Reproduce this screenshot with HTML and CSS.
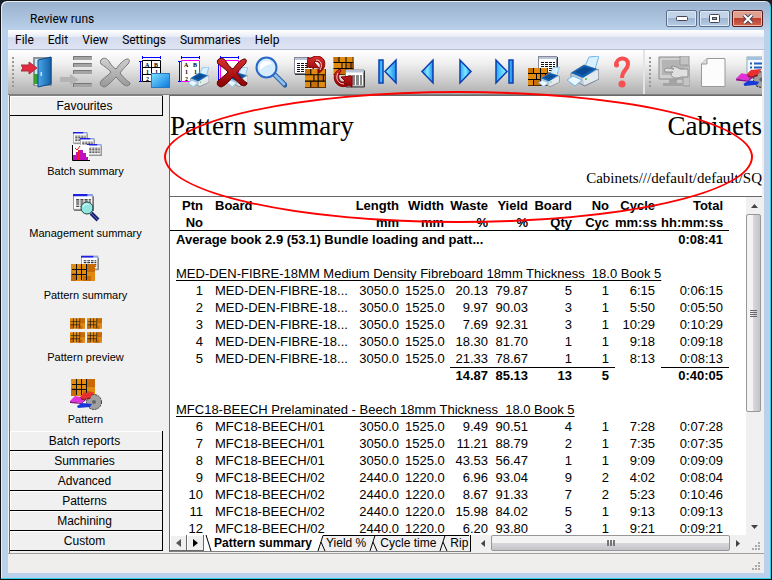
FILE: index.html
```html
<!DOCTYPE html>
<html lang="en">
<head>
    <meta charset="UTF-8">
    <meta name="viewport" content="width=device-width, initial-scale=1.0">
    <title>Review runs</title>
    <link rel="stylesheet" href="styles.css">
</head>
<body>
    <!-- Shared icon parts -->
    <svg class="sprite" aria-hidden="true">
        <defs>
            <linearGradient id="blue" x1="0" y1="0" x2="1" y2="1"><stop offset="0" stop-color="#7fe0ff"/><stop offset="1" stop-color="#0a78e0"/></linearGradient>
            <linearGradient id="nav" x1="0" y1="0" x2="1" y2="0"><stop offset="0" stop-color="#2aa8ff"/><stop offset="0.5" stop-color="#7fe6ff"/><stop offset="1" stop-color="#1a8cf0"/></linearGradient>
            <linearGradient id="grey" x1="0" y1="0" x2="0" y2="1"><stop offset="0" stop-color="#d0d0d0"/><stop offset="1" stop-color="#989898"/></linearGradient>
            <linearGradient id="red" x1="0" y1="0" x2="0" y2="1"><stop offset="0" stop-color="#d83030"/><stop offset="1" stop-color="#8a0000"/></linearGradient>
            <linearGradient id="door" x1="0" y1="0" x2="1" y2="0"><stop offset="0" stop-color="#4aa6e8"/><stop offset="1" stop-color="#1462a8"/></linearGradient>
        </defs>
        <symbol id="printer" viewBox="0 0 32 32">
            <path d="M18 10 L22 1 L32 0 L28 13Z" fill="#d8f0ff" stroke="#6fb4e8"/>
            <path d="M4 17 L17 9 L32 14 L32 23 L18 30 L4 23Z" fill="#c3ccd6" stroke="#7b8794"/>
            <path d="M4 17 L17 9 L30 13 L16 22Z" fill="#0f62b4"/>
            <path d="M8 16 L17 11 L26 13 L16 19Z" fill="#0b4a92"/>
            <path d="M16 22 L31 14 L31 23 L17 29Z" fill="#e4e9ee"/>
            <path d="M0 24 L6 20 L15 24 L8 30Z" fill="#eaf7ff" stroke="#6fb4e8"/>
            <circle cx="19" cy="23" r="1" fill="#30c030"/>
        </symbol>
        <symbol id="bricks" viewBox="0 0 20 18">
            <rect width="20" height="18" fill="#e08a10"/>
            <path d="M0 0h6v5H0zM12 6h8v5h-8zM5 12h7v6H5z" fill="#c96f08"/>
            <path d="M0 5.5h20M0 11.5h20M5.5 0v5M12.5 0v18M5.5 11v7M8.5 5v6M17.5 5v6" stroke="#000" fill="none"/>
            <path d="M19.5 0v17.5H0" stroke="#5a3000" fill="none"/>
        </symbol>
        <symbol id="board" viewBox="0 0 24 17">
            <rect width="24" height="17" fill="#e08a10"/>
            <path d="M16 0h8v8h-8zM0 9h5v8H0zM12 12h8v5h-8z" fill="#c96a08"/>
            <path d="M1 5.5h14M1 10.5h15M5.5 0v16M10.5 0v16M15.5 0v16" stroke="#111" fill="none"/>
        </symbol>
        <symbol id="sheet" viewBox="0 0 20 18">
            <rect x="0.5" y="0.5" width="18" height="16" fill="#fff" stroke="#889"/>
            <rect x="1" y="1" width="18" height="2" fill="#b8c4d8"/>
            <path d="M3 6.5h14M3 8.5h14M3 10.5h14M3 12.5h14M3 14.5h14" stroke="#111" stroke-dasharray="3 1" fill="none"/>
            <path d="M19.5 1v16.5H1" stroke="#333" fill="none"/>
        </symbol>
        <symbol id="win" viewBox="0 0 20 16">
            <rect x="0.5" y="0.5" width="18" height="14" fill="#fff" stroke="#999"/>
            <path d="M0 0h14v2H0z" fill="#2020e0"/><path d="M14 0h5v2h-5z" fill="#8ca0f0"/>
            <path d="M3 5.5h14M3 7.5h14M3 9.5h14M3 11.5h14" stroke="#111" stroke-dasharray="3 1" fill="none"/>
            <path d="M19.5 2v13.5H1" stroke="#777" fill="none"/>
        </symbol>
        <symbol id="cross" viewBox="0 0 32 32">
            <path d="M3 3 C6 1 9 3 11 7 C13 10 15 12 17 13 C20 9 24 4 28 3 C31 3 31 5 29 8 C26 11 23 14 21 17 C24 21 28 25 31 27 C31 30 27 31 24 28 C21 26 19 23 17 21 C13 25 9 30 5 31 C1 30 0 27 3 24 C6 21 10 19 12 16 C8 12 5 10 2 8 C1 6 1 4 3 3Z"/>
        </symbol>
        <symbol id="saw" viewBox="0 0 32 18">
            <circle cx="24" cy="10" r="7.5" fill="#a0a0a0" stroke="#333" stroke-dasharray="2 1"/>
            <circle cx="24" cy="10" r="2" fill="#666"/>
            <path d="M0 9 L5 4 L16 6 L11 11Z" fill="#e030d8"/><path d="M0 9 L11 11 L16 6 L16 8 L11 12 L0 11Z" fill="#90108c"/>
            <path d="M10 5 L14 1 L24 0 L21 5 L14 7Z" fill="#e83030"/><path d="M10 5 L14 7 L21 5 L20 7 L12 8Z" fill="#901010"/>
            <path d="M7 14 L12 11 L22 12 L20 15 L8 16Z" fill="#1838d8"/>
        </symbol>
        <symbol id="dims" viewBox="0 0 32 32">
            <path d="M4 1.5h19M4.500 0v3M22.500 0v3M2.500 5v21M1 5.500h3M1 25.500h3" stroke="#0000ff" fill="none"/>
        </symbol>
    </svg>

    <div class="window">
        <header class="titlebar">
            <h1>Review runs</h1>
            <div class="controls">
                <button type="button" aria-label="Minimize"><svg width="12" height="6"><rect x="0.5" y="0.5" width="11" height="4" rx="1" fill="#fff" stroke="#445"/></svg></button>
                <button type="button" aria-label="Maximize"><svg width="12" height="10"><rect x="0.5" y="0.5" width="10" height="8" rx="1" fill="#fff" stroke="#445"/><rect x="3.5" y="3.5" width="4" height="2" fill="#9ab" stroke="#445"/></svg></button>
                <button type="button" class="close" aria-label="Close"><svg width="12" height="10"><path d="M2 1 L10 9 M10 1 L2 9" stroke="#445" stroke-width="4"/><path d="M2 1 L10 9 M10 1 L2 9" stroke="#fff" stroke-width="2"/></svg></button>
            </div>
        </header>

        <div class="client">
            <nav class="menubar">
                <button type="button">File</button>
                <button type="button">Edit</button>
                <button type="button">View</button>
                <button type="button">Settings</button>
                <button type="button">Summaries</button>
                <button type="button">Help</button>
            </nav>

            <div class="toolbar">
                <span class="grip"></span>
                <button type="button" aria-label="Exit"><svg viewBox="0 0 32 32">
                    <path d="M12 1h19v29H12z" fill="#8a949c"/><path d="M14 3h15v26H14z" fill="#cfe8f4"/><path d="M13 18h5v10h-5z" fill="#38a030"/>
                    <path d="M17 4 L30 1 L30 28 L17 31Z" fill="url(#door)" stroke="#0c4a86"/><path d="M19.5 16v4h1.500v-4z" fill="#bfe4ff"/>
                    <path d="M0 9 L8 9 L8 6 L16 12 L8 18 L8 15 L0 15 L2 12Z" fill="#e8283c" stroke="#a03040"/>
                </svg></button>
                <button type="button" aria-label="Move to"><svg viewBox="0 0 32 32">
                    <path d="M13 0h19v4H13zM13 7h19v4H13zM13 14h19v4H13zM13 27h19v4H13z" fill="#a4a4a4"/><path d="M13.500 4v-3.500h18M13.500 11v-3.500h18M13.500 18v-3.500h18M13.500 31v-3.500h18" stroke="#777" fill="none"/>
                    <path d="M0 21 h10 v-3 l9 6 l-9 5 v-3 h-10z" fill="#b4b4b4"/>
                </svg></button>
                <button type="button" aria-label="Delete"><svg viewBox="0 0 32 32"><use href="#cross" fill="url(#grey)" stroke="#777"/></svg></button>
                <button type="button" aria-label="View parts"><svg viewBox="0 0 32 32">
                    <use href="#dims"/><path d="M4.500 4.500h18v21h-18zM13.500 4v22M4 11.500h19M4 18.500h19" fill="#fff" stroke="#000"/>
                    <text x="7" y="11">A</text><text x="16" y="11">B</text><text x="8" y="18">1</text><text x="17" y="18">1</text><text x="8" y="25">2</text>
                    <rect x="13.500" y="17.500" width="18" height="14" fill="url(#blue)" stroke="#2a78c0"/>
                </svg></button>
                <button type="button" aria-label="Print parts"><svg viewBox="0 0 32 32">
                    <use href="#dims"/><path d="M4.500 4.500h18v21h-18z" fill="#fff" stroke="#f0f"/>
                    <text x="7" y="11">A</text><text x="16" y="11">B</text><text x="8" y="18">1</text><text x="17" y="18">1</text><text x="8" y="25">2</text>
                    <use href="#printer" x="11" y="11" width="21" height="21"/>
                </svg></button>
                <button type="button" aria-label="Cancel print"><svg viewBox="0 0 32 32">
                    <use href="#dims"/><path d="M4.500 4.500h18v21h-18z" fill="#fff" stroke="#f0f"/>
                    <use href="#printer" x="11" y="11" width="21" height="21"/>
                    <use href="#cross" fill="url(#red)" stroke="#500"/>
                </svg></button>
                <button type="button" aria-label="Find"><svg viewBox="0 0 32 32">
                    <path d="M20 19 L30 29" stroke="#2c5c9c" stroke-width="5" stroke-linecap="round"/><path d="M20 19 L29 28" stroke="#8cc0ee" stroke-width="3" stroke-linecap="round"/>
                    <circle cx="11.500" cy="11.500" r="10" fill="#d4ecfc" stroke="#2868c8" stroke-width="2"/><path d="M5 10 C6 4 14 3 17 8 C13 8 9 10 5 14Z" fill="#fff"/>
                </svg></button>
                <button type="button" aria-label="Summary to pattern"><svg viewBox="0 0 32 32">
                    <use href="#sheet" x="0" y="1" width="20" height="18"/><use href="#bricks" x="11" y="13" width="21" height="19"/>
                    <path d="M16 3 C20 -1 27 -1 30 4 C32 9 30 14 25 17 L24 14 C27 11 27 8 24 6 C23 5 21 5 20 6 L25 12 L13 11 L14 1Z" fill="url(#red)" stroke="#800"/>
                    <path d="M22 4 C27 4 29 9 26 14" fill="none" stroke="#f4d0d0"/>
                </svg></button>
                <button type="button" aria-label="Pattern to summary"><svg viewBox="0 0 32 32">
                    <use href="#bricks" x="0" y="1" width="21" height="18"/><use href="#sheet" x="12" y="13" width="20" height="19"/>
                    <path d="M7 13 C2 15 0 20 2 25 C4 31 12 32 16 29 L19 31 L19 20 L8 21 L12 25 C10 27 7 26 6 23 C5 20 6 17 8 15Z" fill="url(#red)" stroke="#800"/>
                    <path d="M5 17 C2 22 5 28 11 28" fill="none" stroke="#f4d0d0"/>
                </svg></button>
                <button type="button" aria-label="First"><svg viewBox="0 0 32 32" fill="url(#nav)" stroke="#0a3fb0" stroke-width="1.500"><path d="M7 4h4v23H7zM24 4 V27 L13 15.500Z"/></svg></button>
                <button type="button" aria-label="Previous"><svg viewBox="0 0 32 32" fill="url(#nav)" stroke="#0a3fb0" stroke-width="1.500"><path d="M22 4 V27 L11 15.500Z"/></svg></button>
                <button type="button" aria-label="Next"><svg viewBox="0 0 32 32" fill="url(#nav)" stroke="#0a3fb0" stroke-width="1.500"><path d="M10 4 V27 L21 15.500Z"/></svg></button>
                <button type="button" aria-label="Last"><svg viewBox="0 0 32 32" fill="url(#nav)" stroke="#0a3fb0" stroke-width="1.500"><path d="M7 4 V27 L18 15.500ZM20 4h4v23h-4z"/></svg></button>
                <button type="button" aria-label="Print patterns"><svg viewBox="0 0 32 32">
                    <use href="#sheet" x="9" y="0" width="22" height="18"/><use href="#bricks" x="0" y="12" width="20" height="18"/><use href="#printer" x="10" y="11" width="22" height="21"/>
                </svg></button>
                <button type="button" aria-label="Print"><svg viewBox="0 0 32 32"><use href="#printer"/></svg></button>
                <button type="button" aria-label="Help"><svg viewBox="0 0 32 32"><path d="M10 9 C10 1 22 0 22 8 C22 14 16 14 16 22" fill="none" stroke="#f85050" stroke-width="4"/><circle cx="10.500" cy="9" r="2.500" fill="#f85050"/><circle cx="16" cy="28" r="3.500" fill="#f85050"/></svg></button>
                <span class="separator"></span>
                <span class="grip"></span>
                <button type="button" aria-label="Touch screen"><svg viewBox="0 0 32 32">
                    <path d="M1 1h27v22H1z" fill="#d0d0d0" stroke="#888"/><path d="M4 4h20v15H4z" fill="#b4b4b4"/><path d="M11 23h8v4h5v3H5v-3h6z" fill="#a4a4a4"/>
                    <path d="M22 0h9v9h-9zM25 10h7v20h-7z" fill="#c4c4c4" stroke="#999"/>
                    <path d="M7 13 C9 11 13 13 16 13 L13 11 C14 9 19 11 22 13 H30 V21 H23 C19 23 15 22 14 20 C12 19 13 17 15 16 H8 C6 16 6 14 7 13Z" fill="#e0e0e0" stroke="#8c8c8c"/>
                </svg></button>
                <button type="button" aria-label="New page"><svg viewBox="0 0 32 32"><path d="M10 2.500h18v28H4.500V8z" fill="#fcfcfc" stroke="#999"/><path d="M10 2.500V8H4.500" fill="#ddd" stroke="#999"/></svg></button>
                <button type="button" aria-label="Machine"><svg viewBox="0 0 32 32">
                    <rect x="11" y="1" width="22" height="21" fill="#f4faff" stroke="#8ab"/><path d="M11 1h22v3H11z" fill="#a8c0e0"/><path d="M14 7.500h2M14 11.500h2M18 7.500h12M18 11.500h12" stroke="#2060c0" stroke-width="2"/>
                    <use href="#saw" x="0" y="13" width="34" height="19"/>
                </svg></button>
            </div>

            <div class="workspace">
                <aside class="sidebar">
                    <button type="button" class="group">Favourites</button>
                    <div class="shortcuts">
                        <button type="button"><svg viewBox="0 0 32 32">
                            <use href="#win" x="3" y="1" width="15" height="12"/><use href="#win" x="10" y="7" width="15" height="12"/><use href="#win" x="17" y="13" width="15" height="12"/>
                            <path d="M3 14h16v15H3z" fill="#fff"/><path d="M2.500 14v15.500H20" fill="none" stroke="#000"/>
                            <path d="M3 29v-5h3v-3h3v-2h4v3h3v4h2v3z" fill="#c010c0"/><path d="M8 19h2v10H8z" fill="#f02020"/><path d="M5 17l2 2l3 -4" fill="none" stroke="#d02020"/>
                        </svg>Batch summary</button>
                        <button type="button"><svg viewBox="0 0 32 32">
                            <use href="#win" x="3" y="1" width="21" height="17"/>
                            <path d="M21 20 L28 27" stroke="#1c2470" stroke-width="4"/><path d="M21 20 L28 27" stroke="#5c68c8" stroke-width="1"/>
                            <circle cx="17" cy="15" r="6" fill="#90e8e0" stroke="#244"/><path d="M13 14c1-3 4-4 6-2" stroke="#fff" fill="none"/>
                        </svg>Management summary</button>
                        <button type="button"><svg viewBox="0 0 32 32">
                            <use href="#win" x="11" y="0" width="18" height="16"/><use href="#board" x="1" y="9" width="24" height="17"/>
                        </svg>Pattern summary</button>
                        <button type="button"><svg viewBox="0 0 32 32">
                            <use href="#board" x="0" y="1" width="15" height="11"/><use href="#board" x="17" y="1" width="15" height="11"/>
                            <use href="#board" x="0" y="15" width="15" height="11"/><use href="#board" x="17" y="15" width="15" height="11"/>
                        </svg>Pattern preview</button>
                        <button type="button"><svg viewBox="0 0 32 32">
                            <use href="#board" x="1" y="0" width="24" height="17"/><use href="#saw" x="0" y="13" width="32" height="18"/>
                        </svg>Pattern</button>
                    </div>
                    <button type="button" class="group">Batch reports</button>
                    <button type="button" class="group">Summaries</button>
                    <button type="button" class="group">Advanced</button>
                    <button type="button" class="group">Patterns</button>
                    <button type="button" class="group">Machining</button>
                    <button type="button" class="group">Custom</button>
                </aside>

                <main class="report">
                    <div class="report-head">
                        <div class="report-title"><h2>Pattern summary</h2><h2>Cabinets</h2></div>
                        <p>Cabinets///default/default/SQ</p>
                    </div>

                    <div class="report-body">
                        <div class="grid">
                            <table>
                                <colgroup>
                                    <col class="c-ptn"><col class="c-board"><col class="c-length"><col class="c-width"><col class="c-waste">
                                    <col class="c-yield"><col class="c-qty"><col class="c-cyc"><col class="c-cycle"><col class="c-total">
                                </colgroup>
                                <thead>
                                    <tr><th>Ptn</th><th>Board</th><th>Length</th><th>Width</th><th>Waste</th><th>Yield</th><th>Board</th><th>No</th><th>Cycle</th><th>Total</th></tr>
                                    <tr class="units"><th>No</th><th></th><th>mm</th><th>mm</th><th>%</th><th>%</th><th>Qty</th><th>Cyc</th><th>mm:ss</th><th>hh:mm:ss</th></tr>
                                </thead>
                                <tbody>
                                    <tr class="average"><td colspan="9">Average book 2.9 (53.1) Bundle loading and patt...</td><td>0:08:41</td></tr>
                                    <tr class="blank"><td colspan="10"></td></tr>
                                    <tr class="material"><td colspan="10"><u>MED-DEN-FIBRE-18MM Medium Density Fibreboard 18mm Thickness&nbsp; 18.0 Book 5</u></td></tr>
                                    <tr><td>1</td><td>MED-DEN-FIBRE-18...</td><td>3050.0</td><td>1525.0</td><td>20.13</td><td>79.87</td><td>5</td><td>1</td><td>6:15</td><td>0:06:15</td></tr>
                                    <tr><td>2</td><td>MED-DEN-FIBRE-18...</td><td>3050.0</td><td>1525.0</td><td>9.97</td><td>90.03</td><td>3</td><td>1</td><td>5:50</td><td>0:05:50</td></tr>
                                    <tr><td>3</td><td>MED-DEN-FIBRE-18...</td><td>3050.0</td><td>1525.0</td><td>7.69</td><td>92.31</td><td>3</td><td>1</td><td>10:29</td><td>0:10:29</td></tr>
                                    <tr><td>4</td><td>MED-DEN-FIBRE-18...</td><td>3050.0</td><td>1525.0</td><td>18.30</td><td>81.70</td><td>1</td><td>1</td><td>9:18</td><td>0:09:18</td></tr>
                                    <tr><td>5</td><td>MED-DEN-FIBRE-18...</td><td>3050.0</td><td>1525.0</td><td>21.33</td><td>78.67</td><td>1</td><td>1</td><td>8:13</td><td>0:08:13</td></tr>
                                    <tr class="totals"><td></td><td></td><td></td><td></td><td class="sum">14.87</td><td class="sum">85.13</td><td class="sum">13</td><td class="sum">5</td><td></td><td class="sum">0:40:05</td></tr>
                                    <tr class="blank"><td colspan="10"></td></tr>
                                    <tr class="material"><td colspan="10"><u>MFC18-BEECH Prelaminated - Beech 18mm Thickness&nbsp; 18.0 Book 5</u></td></tr>
                                    <tr><td>6</td><td>MFC18-BEECH/01</td><td>3050.0</td><td>1525.0</td><td>9.49</td><td>90.51</td><td>4</td><td>1</td><td>7:28</td><td>0:07:28</td></tr>
                                    <tr><td>7</td><td>MFC18-BEECH/01</td><td>3050.0</td><td>1525.0</td><td>11.21</td><td>88.79</td><td>2</td><td>1</td><td>7:35</td><td>0:07:35</td></tr>
                                    <tr><td>8</td><td>MFC18-BEECH/01</td><td>3050.0</td><td>1525.0</td><td>43.53</td><td>56.47</td><td>1</td><td>1</td><td>9:09</td><td>0:09:09</td></tr>
                                    <tr><td>9</td><td>MFC18-BEECH/02</td><td>2440.0</td><td>1220.0</td><td>6.96</td><td>93.04</td><td>9</td><td>2</td><td>4:02</td><td>0:08:04</td></tr>
                                    <tr><td>10</td><td>MFC18-BEECH/02</td><td>2440.0</td><td>1220.0</td><td>8.67</td><td>91.33</td><td>7</td><td>2</td><td>5:23</td><td>0:10:46</td></tr>
                                    <tr><td>11</td><td>MFC18-BEECH/02</td><td>2440.0</td><td>1220.0</td><td>15.98</td><td>84.02</td><td>5</td><td>1</td><td>9:13</td><td>0:09:13</td></tr>
                                    <tr><td>12</td><td>MFC18-BEECH/02</td><td>2440.0</td><td>1220.0</td><td>6.20</td><td>93.80</td><td>3</td><td>1</td><td>9:21</td><td>0:09:21</td></tr>
                                </tbody>
                            </table>
                        </div>
                        <div class="vscroll">
                            <button type="button" aria-label="Scroll up"><svg width="7" height="4"><path d="M0 4 L3.500 0 L7 4Z" fill="#444"/></svg></button>
                            <div class="vthumb"><i></i><i></i><i></i><i></i></div>
                            <div class="vtrack"></div>
                            <button type="button" aria-label="Scroll down"><svg width="7" height="4"><path d="M0 0 L3.500 4 L7 0Z" fill="#444"/></svg></button>
                        </div>
                    </div>

                    <div class="footbar">
                        <div class="sheets">
                            <button type="button" class="step" aria-label="Previous sheet"><svg width="5" height="8"><path d="M5 0 L0 4 L5 8Z" fill="#555"/></svg></button>
                            <button type="button" class="step" aria-label="Next sheet"><svg width="5" height="8"><path d="M0 0 L5 4 L0 8Z" fill="#000"/></svg></button>
                            <svg class="edge first" viewBox="0 0 10 17"><path d="M2 0 L7 16" class="line"/></svg>
                            <button type="button" class="tab active">Pattern summary</button>
                            <svg class="edge" viewBox="0 0 13 17"><path d="M10 0 L5 16 L11 16 L13 16 L13 0Z" fill="#f0f0f0"/><path d="M5 16 L10 0.500 L13 0.500 M8 7 L12 16" class="line"/></svg>
                            <button type="button" class="tab">Yield %</button>
                            <svg class="edge" viewBox="0 0 13 17"><rect width="13" height="17" fill="#f0f0f0"/><path d="M0 0.500H13 M3 16 L8 0.500 M6 7 L10 16" class="line"/></svg>
                            <button type="button" class="tab">Cycle time</button>
                            <svg class="edge" viewBox="0 0 13 17"><rect width="13" height="17" fill="#f0f0f0"/><path d="M0 0.500H13 M3 16 L8 0.500 M6 7 L10 16" class="line"/></svg>
                            <button type="button" class="tab">Rip</button>
                        </div>
                        <div class="hscroll">
                            <button type="button" aria-label="Scroll left"><svg width="4" height="7"><path d="M4 0 L0 3.500 L4 7Z" fill="#444"/></svg></button>
                            <div class="hthumb"><i></i><i></i><i></i></div>
                            <button type="button" aria-label="Scroll right"><svg width="4" height="7"><path d="M0 0 L4 3.500 L0 7Z" fill="#444"/></svg></button>
                        </div>
                        <span class="sizer"><svg width="9" height="9" fill="#aaa"><path d="M6 0h2v2H6zM3 3h2v2H3zM6 3h2v2H6zM0 6h2v2H0zM3 6h2v2H3zM6 6h2v2H6z"/></svg></span>
                    </div>
                    <div class="highlight"></div>
                </main>
            </div>

            <footer class="statusbar"><svg width="9" height="9" fill="#aaa"><path d="M6 0h2v2H6zM3 3h2v2H3zM6 3h2v2H6zM0 6h2v2H0zM3 6h2v2H3zM6 6h2v2H6z"/></svg></footer>
        </div>
    </div>
</body>
</html>
```
FILE: styles.css
```css
/* General Styling */
* {
    box-sizing: border-box;
}

body {
    margin: 0;
    background: #16202c;
    color: #000;
    font-family: 'Liberation Sans', Arial, sans-serif;
    font-size: 12px;
}

button {
    margin: 0;
    padding: 0;
    border: none;
    background: none;
    color: inherit;
    font: inherit;
}

svg {
    display: block;
    flex: none;
}

svg text {
    font: bold 6px 'Liberation Serif', serif;
}

.sprite {
    position: absolute;
    width: 0;
    height: 0;
}

/* Window frame */
.window {
    display: flex;
    flex-direction: column;
    height: 100vh;
    padding: 0 7px 6px;
    border: 1px solid #111;
    border-radius: 7px 7px 0 0;
    background: linear-gradient(#98b0cc, #b9d1ea 30px);
    box-shadow: inset -1px -1px #30d0e8, inset 1px 1px #e4eef8;
    overflow: hidden;
}

.titlebar {
    flex: none;
    display: flex;
    justify-content: space-between;
    height: 29px;
    padding: 9px 1px 0 22px;
    font-family: Roboto, 'Open Sans', sans-serif;
}

.titlebar h1 {
    margin: 0;
    font-size: 12px;
    font-weight: normal;
    line-height: 18px;
}

.controls {
    display: flex;
    gap: 2px;
}

.controls button {
    display: flex;
    align-items: center;
    justify-content: center;
    width: 31px;
    height: 17px;
    border: 1px solid #5a6e8a;
    border-radius: 2px;
    background: linear-gradient(#c4d4e8 50%, #9fb6d2 50%, #b8cce4);
    box-shadow: inset 0 0 0 1px #dce8f4;
}

.controls .close {
    border-color: #5c1c1c;
    background: linear-gradient(#e0a090 50%, #bc4030 50%, #d06850);
    box-shadow: inset 0 0 0 1px #ecb8ac;
}

.client {
    flex: 1;
    display: flex;
    flex-direction: column;
    min-height: 0;
    background: #f0f0f0;
}

.menubar {
    flex: none;
    display: flex;
    gap: 14px;
    height: 20px;
    padding-left: 7px;
    border-bottom: 1px solid #b4bcd4;
    background: linear-gradient(#fff, #e8ecf6 35%, #d4dbee 40%, #dfe4f4);
    font-family: Roboto, 'Open Sans', sans-serif;
}

/* Toolbar */
.toolbar {
    flex: none;
    display: flex;
    align-items: center;
    height: 45px;
    margin-right: 2px;
    padding-left: 4px;
    border-bottom: 1px solid #808080;
    background: linear-gradient(#fff, #f0f0f0 30%, #b0b0b0);
    overflow: hidden;
}

.toolbar button {
    flex: none;
    display: flex;
    justify-content: center;
    width: 39px;
}

.toolbar button svg {
    width: 32px;
    height: 32px;
}

.grip {
    flex: none;
    width: 2px;
    height: 31px;
    margin-right: 3px;
    background: repeating-linear-gradient(#999 0 2px, transparent 2px 4px);
}

.separator {
    flex: none;
    width: 2px;
    height: 100%;
    margin: 0 4px 0 2px;
    background: #e4e4e4;
}

/* Favourites panel */
.workspace {
    flex: 1;
    display: flex;
    min-height: 0;
}

.sidebar {
    flex: none;
    display: flex;
    flex-direction: column;
    width: 154px;
    margin-left: 1px;
    padding-bottom: 2px;
    border-top: 1px solid #808080;
    border-left: 1px solid #696969;
}

.group {
    flex: none;
    height: 20px;
    padding-right: 3px;
    border: 1px solid #000;
    border-width: 0 1px 1px 0;
    box-shadow: inset 1px 1px #fff;
}

.shortcuts {
    flex: 1;
    display: flex;
    flex-direction: column;
    gap: 15px;
    min-height: 0;
    padding-top: 15px;
    overflow: hidden;
    font-size: 11px;
}

.shortcuts button {
    flex: none;
    display: flex;
    flex-direction: column;
    align-items: center;
    gap: 1px;
    padding-right: 2px;
    line-height: 14px;
}

.shortcuts svg {
    width: 32px;
    height: 32px;
}

/* Report */
.report {
    position: relative;
    flex: 1;
    display: flex;
    flex-direction: column;
    min-width: 0;
    margin: 0 2px 1px 6px;
    border: 1px solid #696969;
    border-width: 1px 0 0 1px;
    background: #fff;
}

.report-head {
    flex: none;
    height: 101px;
    padding-top: 14px;
    border-bottom: 1px solid #696969;
    font-family: 'Liberation Serif', 'Times New Roman', serif;
}

.report-title {
    display: flex;
    justify-content: space-between;
}

.report-head h2 {
    margin: 0;
    font-size: 27px;
    font-weight: normal;
    line-height: 32px;
}

.report-head p {
    margin: 26px 0 0;
    font-size: 15px;
    line-height: 20px;
    text-align: right;
}

.report-body {
    flex: 1;
    display: flex;
    min-height: 0;
}

.grid {
    flex: 1;
    min-width: 0;
    overflow: hidden;
}

table {
    width: 559px;
    table-layout: fixed;
    border-collapse: separate;
    border-spacing: 0;
    font-size: 13px;
    line-height: 17px;
    white-space: nowrap;
}

.c-ptn { width: 39px; }
.c-board { width: 146px; }
.c-length { width: 50px; }
.c-width { width: 45px; }
.c-waste { width: 44px; }
.c-yield { width: 40px; }
.c-qty { width: 44px; }
.c-cyc { width: 37px; }
.c-cycle { width: 46px; }
.c-total { width: 68px; }

th, td {
    height: 17px;
    padding: 0 6px 0 0;
    text-align: right;
}

th:nth-child(2), td:nth-child(2) {
    padding-left: 6px;
    text-align: left;
}

.units th {
    box-shadow: inset 0 -1px #000;
}

.average td, .totals td {
    font-weight: bold;
}

.average td:first-child, .material td {
    padding-left: 6px;
    text-align: left;
}

.average td:last-child {
    padding-left: 0;
    text-align: right;
}

.material u {
    text-decoration-skip-ink: none;
    text-underline-offset: 2px;
}

.totals .sum {
    box-shadow: inset 0 1px #000;
}

/* Scroll bars */
.vscroll {
    flex: none;
    display: flex;
    flex-direction: column;
    width: 16px;
    background: #f0f0f0;
}

.vscroll button, .hscroll button {
    flex: none;
    display: flex;
    align-items: center;
    justify-content: center;
    width: 16px;
    height: 17px;
}

.vthumb, .hthumb {
    display: flex;
    align-items: center;
    justify-content: center;
    gap: 1px;
    border: 1px solid #979797;
    border-radius: 2px;
}

.vthumb {
    flex: 65;
    flex-direction: column;
    width: 15px;
    background: linear-gradient(90deg, #f4f4f4 50%, #d8d8dc 50%, #c4c4c8);
}

.vthumb i {
    width: 7px;
    height: 1px;
    background: #666;
}

.vtrack {
    flex: 35;
}

.footbar {
    flex: none;
    display: flex;
    height: 17px;
    background: #f0f0f0;
}

.hscroll {
    flex: 1;
    display: flex;
    min-width: 0;
    margin-left: 4px;
}

.hthumb {
    flex: 1;
    margin-bottom: 1px;
    background: linear-gradient(#f4f4f4 50%, #d8d8dc 50%, #c4c4c8);
}

.hthumb i {
    width: 2px;
    height: 6px;
    background: #777;
}

.sizer {
    display: flex;
    align-items: flex-end;
    justify-content: flex-end;
    width: 16px;
    padding: 0 1px 1px 0;
}

/* Sheet tabs */
.sheets {
    flex: none;
    display: flex;
    width: 301px;
    border-right: 1px solid #000;
    border-bottom: 1px solid #808080;
    overflow: hidden;
}

.step {
    flex: none;
    display: flex;
    align-items: center;
    justify-content: center;
    width: 17px;
    border: 1px solid #696969;
    border-width: 0 1px 1px 0;
    box-shadow: inset 1px 1px #fff;
}

.edge {
    width: 13px;
    height: 17px;
    background: #fff;
}

.edge.first {
    width: 10px;
}

.line {
    fill: none;
    stroke: #000;
}

.tab {
    flex: none;
    padding-right: 1px;
    border-top: 1px solid #000;
    background: #f0f0f0;
    line-height: 15px;
    white-space: nowrap;
}

.tab.active {
    border-top-color: #fff;
    background: #fff;
    font-weight: bold;
}

/* Ring drawn round the report heading */
.highlight {
    position: absolute;
    top: -5px;
    right: 9px;
    left: -6px;
    height: 132px;
    border: 2px solid #f00;
    border-radius: 50%;
    pointer-events: none;
}

.statusbar {
    flex: none;
    display: flex;
    align-items: flex-end;
    justify-content: flex-end;
    height: 20px;
    padding: 0 3px 2px 0;
    border-top: 1px solid #a0a0a0;
    background: #f0eded;
}
```
